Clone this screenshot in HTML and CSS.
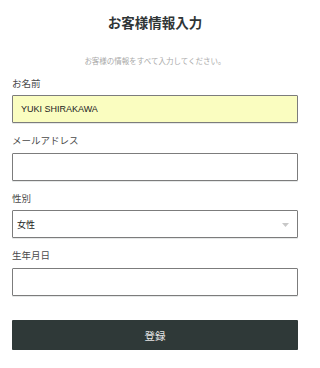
FILE: index.html
```html
<!DOCTYPE html>
<html lang="ja">
<head>
<meta charset="utf-8">
<title>お客様情報入力</title>
<link rel="stylesheet" href="styles.css">
</head>
<body>
<main class="page">
  <h1 class="title">お客様情報入力</h1>
  <p class="lead">お客様の情報をすべて入力してください。</p>
  <form class="form">
    <div class="field">
      <label class="label" for="name">お名前</label>
      <input class="input input-filled" id="name" type="text" value="YUKI SHIRAKAWA">
    </div>
    <div class="field">
      <label class="label" for="mail">メールアドレス</label>
      <input class="input" id="mail" type="text" value="">
    </div>
    <div class="field">
      <label class="label" for="sex">性別</label>
      <div class="select-wrap">
        <select class="input select" id="sex">
          <option>女性</option>
          <option>男性</option>
        </select>
        <svg class="select-arrow" width="7" height="4" viewBox="0 0 7 4"><path d="M0 0H7L3.5 4Z" fill="#c8c8c8"/></svg>
      </div>
    </div>
    <div class="field">
      <label class="label" for="birth">生年月日</label>
      <input class="input" id="birth" type="text" value="">
    </div>
    <button class="submit" type="button">登録</button>
  </form>
</main>
</body>
</html>
```

FILE: styles.css
```css
html, body {
  margin: 0;
  padding: 0;
  background: #ffffff;
}

body {
  font-family: "Noto Sans CJK JP", "Noto Sans", sans-serif;
  color: #3a3a3a;
}

.page {
  box-sizing: border-box;
  width: 310px;
  padding: 12px 12px 0 12px;
}

.title {
  margin: 0;
  font-size: 13.5px;
  line-height: 20px;
  font-weight: 700;
  text-align: center;
  color: #2f3536;
}

.lead {
  margin: 23px 0 0 0;
  font-size: 7.5px;
  line-height: 11px;
  text-align: center;
  color: #a9a9a9;
}

.form {
  display: flex;
  flex-direction: column;
  margin-top: 9.5px;
}

.field {
  display: flex;
  flex-direction: column;
  margin-bottom: 10px;
}

.label {
  display: block;
  font-size: 9.5px;
  line-height: 14px;
  color: #4a4a4a;
  margin-bottom: 5.5px;
}

.input {
  box-sizing: border-box;
  display: block;
  width: 100%;
  height: 28px;
  margin: 0;
  border: 1.5px solid #7c7c7c;
  border-radius: 1px;
  background: #ffffff;
  box-shadow: 0 1px 0 #e6e8e8;
  font-family: "Liberation Sans", "Noto Sans CJK JP", sans-serif;
  font-size: 9px;
  color: #222222;
  padding: 0 8px;
  outline: none;
}

.input-filled {
  background: #fafdc0;
}

.select-wrap {
  position: relative;
}

.select {
  -webkit-appearance: none;
  appearance: none;
  padding: 0 4px;
  font-family: "Noto Sans CJK JP", sans-serif;
  font-size: 9px;
  color: #222222;
}

.select-arrow {
  position: absolute;
  right: 9px;
  top: 12.5px;
}

.submit {
  margin-top: 14.5px;
  height: 30px;
  width: 100%;
  border: none;
  border-radius: 1px;
  background: #2f3938;
  color: #e6e6e6;
  font-family: "Noto Sans CJK JP", sans-serif;
  font-size: 10.5px;
  box-shadow: 0 1px 0 #dcdede;
}
```
